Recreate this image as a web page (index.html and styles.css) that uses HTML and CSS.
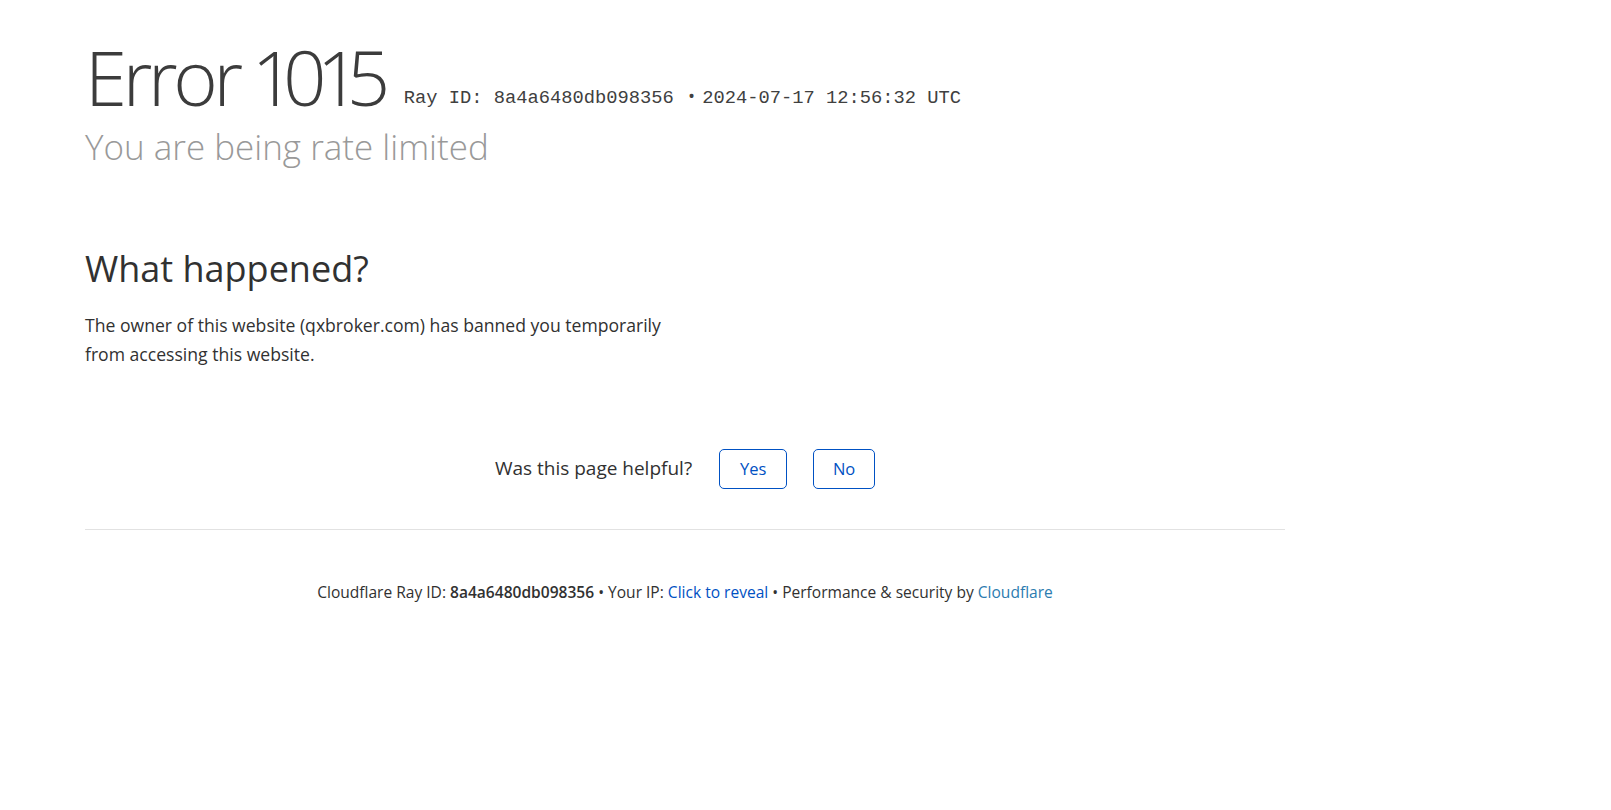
FILE: index.html
```html
<!DOCTYPE html>
<html lang="en">
<head>
<meta charset="utf-8">
<title>Access denied | qxbroker.com used Cloudflare to restrict access</title>
<link rel="stylesheet" href="styles.css">
</head>
<body>
<div class="page">
  <header class="overview">
    <h1 class="title"><span class="code">Error 1015</span><small class="ray">Ray ID: 8a4a6480db098356 <span class="bullet">•</span>2024-07-17 12:56:32 UTC</small></h1>
    <h2 class="subhead">You are being rate limited</h2>
  </header>
  <section class="details">
    <div class="column">
      <h2 class="what">What happened?</h2>
      <p class="desc">The owner of this website (qxbroker.com) has banned you temporarily from accessing this website.</p>
    </div>
  </section>
  <div class="feedback">
    <span class="question">Was this page helpful?</span>
    <button class="fb-btn fb-yes" type="button">Yes</button>
    <button class="fb-btn fb-no" type="button">No</button>
  </div>
  <footer class="footer">
    <p class="footer-line">Cloudflare Ray ID: <strong class="ray-hash">8a4a6480db098356</strong> <span class="sep">•</span> Your IP: <button class="reveal" type="button">Click to reveal</button> <span class="sep">•</span> Performance &amp; security by <a class="cf-link" href="#">Cloudflare</a></p>
  </footer>
</div>
</body>
</html>
```
FILE: styles.css
```css
html, body {
  margin: 0;
  padding: 0;
  background: #ffffff;
}

body {
  font-family: "Open Sans", "Noto Sans", "Liberation Sans", sans-serif;
  color: #404040;
}

.page {
  margin-left: 85px;
  width: 1200px;
  padding-top: 36px;
}

.title {
  display: flex;
  align-items: baseline;
  margin: 0;
  font-size: 76px;
  line-height: 82px;
  font-weight: 300;
  color: #3c3c3c;
}

.code {
  letter-spacing: -4.3px;
  word-spacing: 3px;
  font-variant-numeric: proportional-nums;
}

.ray {
  margin-left: 19px;
  font-family: "Liberation Mono", "DejaVu Sans Mono", monospace;
  font-size: 18.75px;
  line-height: 1;
  font-weight: 400;
  color: #404040;
  white-space: nowrap;
  position: relative;
  top: -3px;
}

.bullet {
  font-family: "Open Sans", "Liberation Sans", sans-serif;
  margin-left: 3px;
  margin-right: 7px;
}

.subhead {
  margin: 6px 0 0;
  font-size: 35px;
  line-height: 45.5px;
  font-weight: 300;
  color: #999999;
}

.details {
  margin-top: 76px;
}

.column {
  width: 600px;
}

.what {
  margin: 0;
  font-size: 36px;
  line-height: 46.8px;
  font-weight: 400;
  color: #313131;
}

.desc {
  margin: 19px 0 0;
  font-size: 17.6px;
  line-height: 28.8px;
  color: #313131;
}

.feedback {
  margin-top: 80px;
  display: flex;
  justify-content: center;
  align-items: center;
  height: 40px;
}

.question {
  font-size: 19px;
  line-height: 28.8px;
  color: #313131;
  margin-right: 27px;
}

.fb-btn {
  box-sizing: border-box;
  height: 40px;
  padding: 0;
  border: 1px solid #0051c3;
  border-radius: 5px;
  background: #ffffff;
  color: #0051c3;
  font-family: "Open Sans", "Noto Sans", "Liberation Sans", sans-serif;
  font-size: 16.5px;
  line-height: 1;
  cursor: pointer;
}

.fb-yes {
  width: 68px;
  margin-right: 26px;
}

.fb-no {
  width: 62px;
}

.footer {
  margin-top: 40px;
  border-top: 1px solid #e2e2e2;
  padding-top: 51px;
  text-align: center;
}

.footer-line {
  margin: 0;
  font-size: 15.55px;
  line-height: 23px;
  color: #313131;
}

.ray-hash {
  font-weight: 600;
}

.reveal {
  border: 0;
  padding: 0;
  background: none;
  font: inherit;
  color: #0051c3;
  cursor: pointer;
}

.cf-link {
  color: #2c7cb0;
  text-decoration: none;
}
```
